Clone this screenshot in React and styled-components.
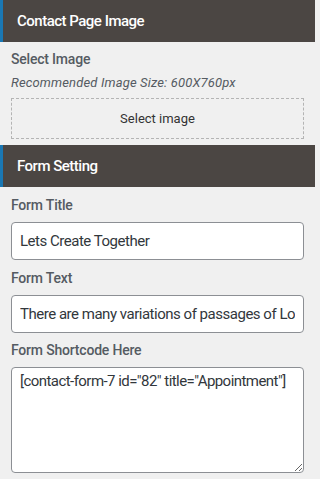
import styled, { createGlobalStyle } from "styled-components";

const GlobalStyle = createGlobalStyle`
  * { box-sizing: border-box; }
  body {
    margin: 0;
    background: #f0f0f0;
    font-family: Roboto, "Liberation Sans", sans-serif;
  }
`;

const Panel = styled.div`
  width: 315px;
  background: #f0f0f0;
  padding-bottom: 7px;
`;

const SectionHeader = styled.h2`
  margin: 0;
  height: 42px;
  display: flex;
  align-items: center;
  padding-left: 14px;
  background: #4b4643;
  border-left: 3px solid #1a78b4;
  color: #fff;
  font-size: 15px;
  font-weight: 500;
  letter-spacing: -0.5px;
`;

const Body = styled.div`
  padding: 0 11px;
  display: flex;
  flex-direction: column;
`;

const Label = styled.label`
  display: block;
  color: #555b62;
  font-size: 14px;
  font-weight: 500;
  letter-spacing: -0.2px;
  line-height: 18px;
  margin-top: ${(p) => p.$top || 8}px;
  margin-bottom: ${(p) => p.$bottom || 8}px;
`;

const Note = styled.p`
  margin: 0 0 6px;
  font-size: 13px;
  font-style: italic;
  letter-spacing: 0.15px;
  color: #555b62;
  line-height: 18px;
`;

const DropZone = styled.button`
  height: 41px;
  width: 100%;
  border: 1px dashed #b4b4b4;
  background: transparent;
  font-family: inherit;
  font-size: 13px;
  color: #333;
  margin-bottom: 6px;
  cursor: pointer;
`;

const TextInput = styled.input`
  height: 38px;
  width: 100%;
  border: 1px solid #8c8f94;
  border-radius: 4px;
  background: #fff;
  padding: 0 8px;
  font-family: inherit;
  font-size: 15px;
  letter-spacing: -0.48px;
  color: #32373c;
  outline: none;
`;

const TextArea = styled.textarea`
  display: block;
  height: 106px;
  width: 100%;
  border: 1px solid #8c8f94;
  border-radius: 4px;
  background: #fff;
  padding: 3px 8px;
  font-family: inherit;
  font-size: 15px;
  letter-spacing: -0.55px;
  line-height: 20px;
  color: #32373c;
  outline: none;
  resize: vertical;
`;

export default function App() {
  return (
    <Panel>
      <GlobalStyle />
      <SectionHeader>Contact Page Image</SectionHeader>
      <Body>
        <Label $top={8} $bottom={6}>Select Image</Label>
        <Note>Recommended Image Size: 600X760px</Note>
        <DropZone>Select image</DropZone>
      </Body>
      <SectionHeader>Form Setting</SectionHeader>
      <Body>
        <Label $top={9} $bottom={8}>Form Title</Label>
        <TextInput defaultValue="Lets Create Together" />
        <Label $top={9} $bottom={8}>Form Text</Label>
        <TextInput defaultValue="There are many variations of passages of Lorem Ipsum available" />
        <Label $top={8} $bottom={8}>Form Shortcode Here</Label>
        <TextArea defaultValue={'[contact-form-7 id="82" title="Appointment"]'} />
      </Body>
    </Panel>
  );
}
